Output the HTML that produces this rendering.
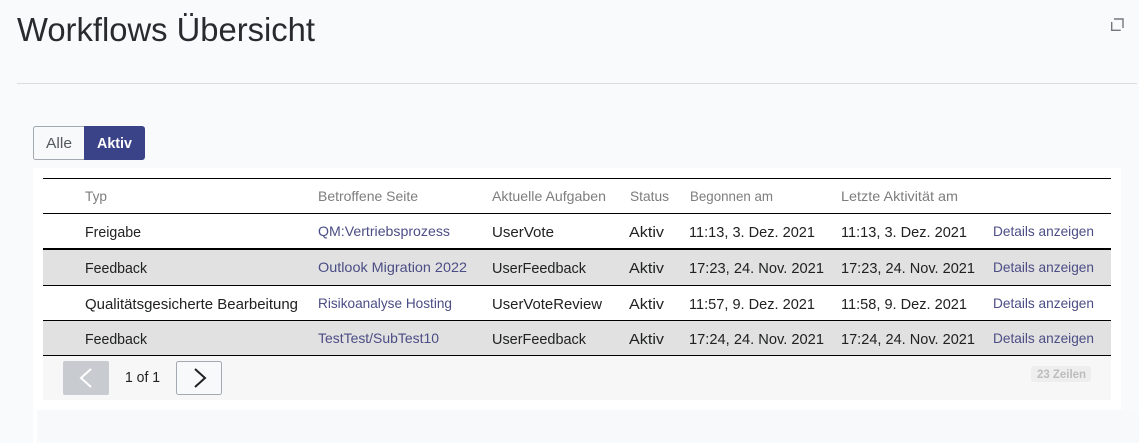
<!DOCTYPE html>
<html lang="de">
<head>
<meta charset="utf-8">
<title>Workflows Übersicht</title>
<style>
html,body{margin:0;padding:0;width:1139px;height:443px;overflow:hidden;background:#f9fafc}
svg{display:block}
text{font-family:"Liberation Sans",sans-serif;font-size:15px;fill:#202122}
.h{font-size:14px;fill:#7d7d7d}
.l{font-size:14px;fill:#4b4d85}
</style>
</head>
<body>
<svg width="1139" height="443" viewBox="0 0 1139 443" xmlns="http://www.w3.org/2000/svg">
<rect width="1139" height="443" fill="#f9fafc"/>
<text x="17" y="41" style="font-size:33px;fill:#2a2a2e" textLength="298" lengthAdjust="spacingAndGlyphs">Workflows Übersicht</text>
<path d="M1114 19h9v9" fill="none" stroke="#72777d" stroke-width="1.4"/>
<path d="M1111.7 22v8.3h9" fill="none" stroke="#72777d" stroke-width="1.4"/>
<rect x="17" y="83" width="1120" height="1" fill="#dcdcdc"/>

<rect x="33.5" y="126.5" width="53" height="33" rx="2" fill="#f8f9fa" stroke="#a2a9b1"/>
<text x="46" y="148" style="font-size:15px;fill:#54595d" textLength="26" lengthAdjust="spacingAndGlyphs">Alle</text>
<path d="M84 126h58a3 3 0 0 1 3 3v28a3 3 0 0 1-3 3h-58z" fill="#3b4388"/>
<text x="97" y="148" style="font-size:15px;font-weight:bold;fill:#fff" textLength="35" lengthAdjust="spacingAndGlyphs">Aktiv</text>

<rect x="33" y="168" width="1088" height="242" fill="#fff"/>
<rect x="33" y="410" width="4" height="33" fill="#fff"/>
<rect x="37" y="410" width="1102" height="32" fill="#f8f9fb"/>

<rect x="43" y="250" width="1068" height="35" fill="#e1e1e1"/>
<rect x="43" y="321" width="1068" height="34" fill="#e1e1e1"/>
<rect x="43" y="356" width="1068" height="44" fill="#f7f7f7"/>

<rect x="43" y="178" width="1068" height="1" fill="#000"/>
<rect x="43" y="213" width="1068" height="1" fill="#000"/>
<rect x="43" y="248" width="1068" height="2" fill="#000"/>
<rect x="43" y="285" width="1068" height="1" fill="#000"/>
<rect x="43" y="320" width="1068" height="1" fill="#000"/>
<rect x="43" y="355" width="1068" height="1" fill="#000"/>

<text class="h" x="85" y="201" textLength="22" lengthAdjust="spacingAndGlyphs">Typ</text>
<text class="h" x="318" y="201" textLength="100" lengthAdjust="spacingAndGlyphs">Betroffene Seite</text>
<text class="h" x="492" y="201" textLength="114" lengthAdjust="spacingAndGlyphs">Aktuelle Aufgaben</text>
<text class="h" x="630" y="201" textLength="39" lengthAdjust="spacingAndGlyphs">Status</text>
<text class="h" x="690" y="201" textLength="83" lengthAdjust="spacingAndGlyphs">Begonnen am</text>
<text class="h" x="841" y="201" textLength="117" lengthAdjust="spacingAndGlyphs">Letzte Aktivität am</text>

<text x="85" y="237" textLength="56" lengthAdjust="spacingAndGlyphs">Freigabe</text>
<text class="l" x="318" y="236" textLength="132" lengthAdjust="spacingAndGlyphs">QM:Vertriebsprozess</text>
<text x="492" y="237" textLength="62" lengthAdjust="spacingAndGlyphs">UserVote</text>
<text x="629" y="237" textLength="35" lengthAdjust="spacingAndGlyphs">Aktiv</text>
<text x="689" y="237" textLength="126" lengthAdjust="spacingAndGlyphs">11:13, 3. Dez. 2021</text>
<text x="841" y="237" textLength="126" lengthAdjust="spacingAndGlyphs">11:13, 3. Dez. 2021</text>
<text class="l" x="993" y="236" textLength="101" lengthAdjust="spacingAndGlyphs">Details anzeigen</text>

<text x="85" y="273" textLength="62" lengthAdjust="spacingAndGlyphs">Feedback</text>
<text class="l" x="318" y="272" textLength="149" lengthAdjust="spacingAndGlyphs">Outlook Migration 2022</text>
<text x="492" y="273" textLength="94" lengthAdjust="spacingAndGlyphs">UserFeedback</text>
<text x="629" y="273" textLength="35" lengthAdjust="spacingAndGlyphs">Aktiv</text>
<text x="689" y="273" textLength="135" lengthAdjust="spacingAndGlyphs">17:23, 24. Nov. 2021</text>
<text x="841" y="273" textLength="134" lengthAdjust="spacingAndGlyphs">17:23, 24. Nov. 2021</text>
<text class="l" x="993" y="272" textLength="101" lengthAdjust="spacingAndGlyphs">Details anzeigen</text>

<text x="85" y="309" textLength="213" lengthAdjust="spacingAndGlyphs">Qualitätsgesicherte Bearbeitung</text>
<text class="l" x="318" y="308" textLength="134" lengthAdjust="spacingAndGlyphs">Risikoanalyse Hosting</text>
<text x="492" y="309" textLength="110" lengthAdjust="spacingAndGlyphs">UserVoteReview</text>
<text x="629" y="309" textLength="35" lengthAdjust="spacingAndGlyphs">Aktiv</text>
<text x="689" y="309" textLength="126" lengthAdjust="spacingAndGlyphs">11:57, 9. Dez. 2021</text>
<text x="841" y="309" textLength="126" lengthAdjust="spacingAndGlyphs">11:58, 9. Dez. 2021</text>
<text class="l" x="993" y="308" textLength="101" lengthAdjust="spacingAndGlyphs">Details anzeigen</text>

<text x="85" y="344" textLength="62" lengthAdjust="spacingAndGlyphs">Feedback</text>
<text class="l" x="318" y="343" textLength="121" lengthAdjust="spacingAndGlyphs">TestTest/SubTest10</text>
<text x="492" y="344" textLength="94" lengthAdjust="spacingAndGlyphs">UserFeedback</text>
<text x="629" y="344" textLength="35" lengthAdjust="spacingAndGlyphs">Aktiv</text>
<text x="689" y="344" textLength="135" lengthAdjust="spacingAndGlyphs">17:24, 24. Nov. 2021</text>
<text x="841" y="344" textLength="134" lengthAdjust="spacingAndGlyphs">17:24, 24. Nov. 2021</text>
<text class="l" x="993" y="343" textLength="101" lengthAdjust="spacingAndGlyphs">Details anzeigen</text>

<rect x="63" y="361" width="46" height="34" rx="2" fill="#c8ccd1"/>
<path d="M91 369l-10 9 10 9" fill="none" stroke="#fff" stroke-width="2"/>
<text x="125" y="382" textLength="35" lengthAdjust="spacingAndGlyphs">1 of 1</text>
<rect x="176.500" y="361.500" width="45" height="33" rx="2" fill="#f8f9fa" stroke="#a2a9b1"/>
<path d="M195 369l10 9-10 9" fill="none" stroke="#202122" stroke-width="2"/>

<rect x="1031" y="366" width="60" height="16" rx="3" fill="#eeeeee"/>
<text x="1037" y="378" style="font-size:12px;font-weight:bold;fill:#bdbdbd" textLength="49" lengthAdjust="spacingAndGlyphs">23 Zeilen</text>
</svg>
</body>
</html>
